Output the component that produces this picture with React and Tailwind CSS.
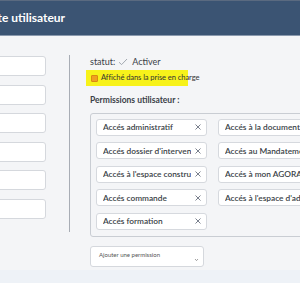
import React from 'react';

const permissions = [
  'Accés administratif',
  'Accés à la documentation',
  "Accés dossier d'intervention",
  'Accés au Mandatement',
  "Accés à l'espace construction",
  'Accés à mon AGORA',
  'Accés commande',
  "Accés à l'espace d'administration",
  'Accés formation',
];

const Chip = ({ label }) => (
  <div className="flex items-center w-[111px] h-[17px] bg-white border border-[#d6d9de] rounded-[3px] pl-[6px] pr-[4px] shrink-0">
    <span className="flex-1 overflow-hidden whitespace-nowrap text-[8.3px] text-[#3a3f47] font-semibold">
      {label}
    </span>
    <svg width="8" height="8" viewBox="0 0 8 8" className="ml-[3px] shrink-0">
      <path d="M1.5 1.5 L6.5 6.5 M6.5 1.5 L1.5 6.5" stroke="#6b7280" strokeWidth="0.9" />
    </svg>
  </div>
);

const App = () => {
  return (
    <div
      className="w-[300px] h-[283px] overflow-hidden bg-[#f4f5f7] flex flex-col"
      style={{ fontFamily: 'Lato, "Open Sans", sans-serif' }}
    >
      <div className="h-[36px] shrink-0 bg-[#3b5473] border-t border-[#5a6a80] border-b border-b-[#8a99ad] flex items-center">
        <h1 className="-ml-[34px] text-white font-bold text-[12px] whitespace-nowrap">
          Compte utilisateur
        </h1>
      </div>

      <div className="flex-1 flex">
        <div className="w-[69px] shrink-0 flex flex-col gap-[8.5px] pt-[20px]">
          {[0, 1, 2, 3, 4, 5].map((i) => (
            <div
              key={i}
              className="-ml-[12px] w-[58px] h-[20px] bg-white border border-[#d5d8dd] rounded-[3px]"
            />
          ))}
        </div>

        <div className="w-px bg-[#a8adb5] mt-[19px] mb-[38px] shrink-0" />

        <div className="flex-1 pl-[20px] pt-[20px] flex flex-col">
          <div className="flex items-center h-[12px] text-[9px] text-[#3a3f47]">
            <span>statut:</span>
            <svg width="10" height="8" viewBox="0 0 10 8" className="ml-[3px] mr-[4px]">
              <path d="M1 4.2 L3.6 6.6 L9 1" fill="none" stroke="#9aa0a8" strokeWidth="0.9" />
            </svg>
            <span>Activer</span>
          </div>

          <div className="mt-[2px] -ml-[4px] w-[102px] h-[16px] bg-[#f7f21a] flex items-center pl-[5px]">
            <span className="w-[7px] h-[7px] bg-[#f0a020] border border-[#d98a10] rounded-[1px] mr-[3px] shrink-0" />
            <span className="text-[7.6px] text-[#333] whitespace-nowrap tracking-[-0.1px]">
              Affiché dans la prise en charge
            </span>
          </div>

          <div className="mt-[8px] text-[8.5px] font-bold text-[#3a3f47]">
            Permissions utilisateur :
          </div>

          <div className="mt-[6px] w-[240px] h-[124px] border border-[#c9cdd3] rounded-[3px] pt-[5px] pl-[5px]">
            <div className="grid grid-cols-[111px_111px] gap-x-[11px] gap-y-[6.5px]">
              {permissions.map((p) => (
                <Chip key={p} label={p} />
              ))}
            </div>
          </div>

          <div className="mt-[9px] w-[114px] h-[21px] bg-white border border-[#d5d8dd] rounded-[3px] relative">
            <span className="absolute left-[8px] top-[3px] text-[6px] text-[#555] whitespace-nowrap">
              Ajouter une permission
            </span>
            <svg width="5" height="4" viewBox="0 0 5 4" className="absolute right-[4px] top-[11px]">
              <path d="M1 1 L2.5 2.6 L4 1" fill="none" stroke="#777" strokeWidth="0.7" />
            </svg>
          </div>
        </div>
      </div>

      <div className="h-[13px] shrink-0 bg-[#eef2f7]" />
    </div>
  );
};

export default App;
